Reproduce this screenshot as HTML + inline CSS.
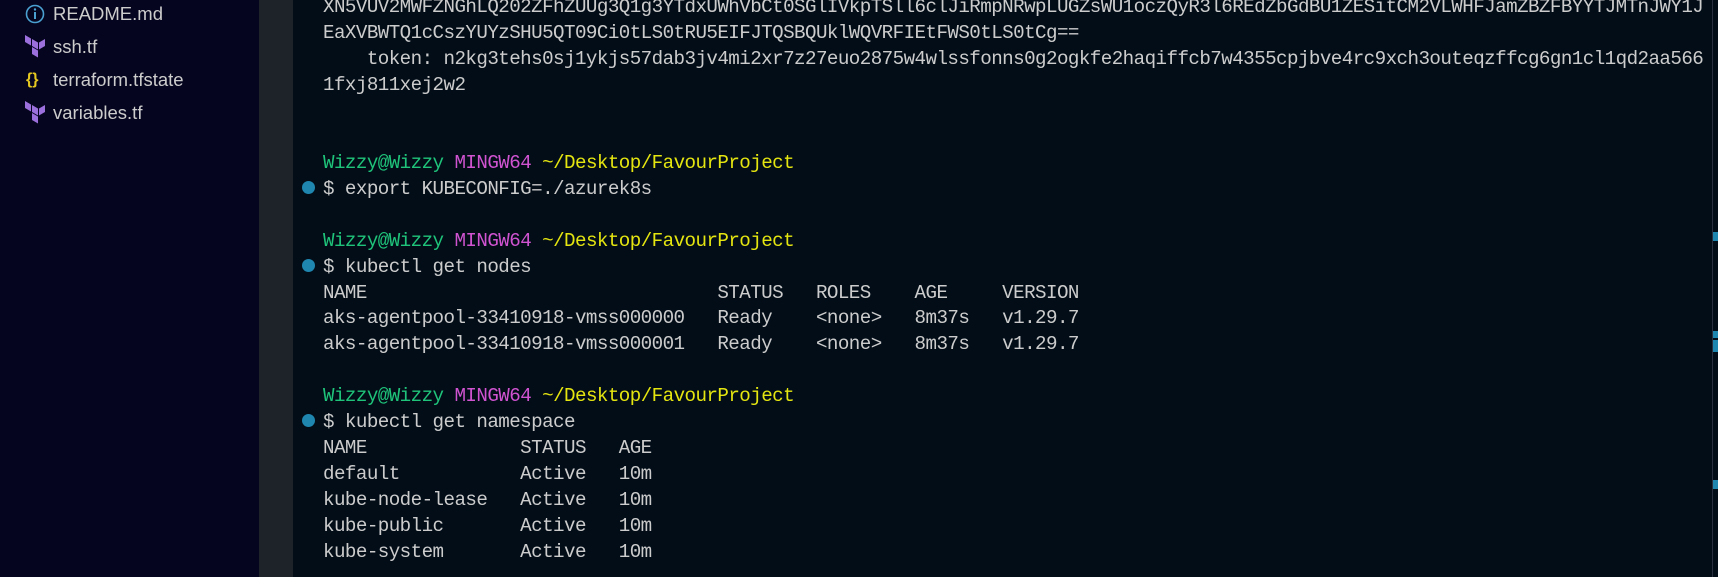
<!DOCTYPE html>
<html><head><meta charset="utf-8"><style>
html,body{margin:0;padding:0;width:1718px;height:577px;overflow:hidden;background:#020d18;}
#side{position:absolute;left:0;top:0;width:259px;height:577px;background:#05051f;}
#gap{position:absolute;left:259px;top:0;width:34px;height:577px;background:#1d2329;}
#term{position:absolute;left:293px;top:0;width:1425px;height:577px;background:#020d18;}
.f{position:absolute;left:53px;font:18.5px "Liberation Sans",sans-serif;color:#cccccc;line-height:24px;}
.ic{position:absolute;left:24px;}
.l{position:absolute;left:323px;font:19.2px "Liberation Mono",monospace;letter-spacing:-0.56px;color:#cccccc;line-height:26px;white-space:pre;}
.g{color:#1fc47a}.m{color:#d053d0}.y{color:#e5e510}
.dot{position:absolute;left:302px;width:13px;height:13px;border-radius:50%;background:#1f86b0;}
.sb{position:absolute;left:1713px;width:5px;background:#1f86b0;}
</style></head><body>
<div id="side">
 <svg class="ic" style="top:3px" width="22" height="22" viewBox="0 0 22 22"><circle cx="11" cy="11" r="8.5" fill="none" stroke="#4aa0d0" stroke-width="1.6"/><rect x="10" y="9" width="2" height="7" fill="#4aa0d0"/><circle cx="11" cy="6.5" r="1.2" fill="#4aa0d0"/></svg>
 <div class="f" style="top:2px">README.md</div>
 <svg class="ic" style="top:34px" width="22" height="24" viewBox="0 0 22 24"><path d="M1 1l6 3.5v7L1 8z M8 5l6 3.5v7L8 12z M15 8.5l6-3.5v7l-6 3.5z M8 13l6 3.5v7L8 20z" fill="#9b6fdc"/></svg>
 <div class="f" style="top:35px">ssh.tf</div>
 <div class="f" style="top:68px;left:26px;color:#e5c820;font-weight:bold;font-size:16px">{}</div>
 <div class="f" style="top:68px">terraform.tfstate</div>
 <svg class="ic" style="top:100px" width="22" height="24" viewBox="0 0 22 24"><path d="M1 1l6 3.5v7L1 8z M8 5l6 3.5v7L8 12z M15 8.5l6-3.5v7l-6 3.5z M8 13l6 3.5v7L8 20z" fill="#9b6fdc"/></svg>
 <div class="f" style="top:101px">variables.tf</div>
</div>
<div id="gap"></div>
<div id="term"></div>
<div style="position:absolute;left:1712px;top:0;width:1px;height:577px;background:#2a3040"></div>
<div class="sb" style="top:232px;height:9px"></div>
<div class="sb" style="top:331px;height:7px"></div>
<div class="sb" style="top:340px;height:12px"></div>
<div class="sb" style="top:480px;height:9px"></div>

<div class="l" style="top:-6px">XN5VUV2MWFZNGhLQ202ZFhZUUg3Q1g3YTdxUWhVbCt0SGlIVkpTSll6clJiRmpNRwpLUGZsWU1oczQyR3l6REdZbGdBU1ZESitCM2VLWHFJamZBZFBYYTJMTnJWY1J</div>
<div class="l" style="top:20px">EaXVBWTQ1cCszYUYzSHU5QT09Ci0tLS0tRU5EIFJTQSBQUklWQVRFIEtFWS0tLS0tCg==</div>
<div class="l" style="top:46px">    token: n2kg3tehs0sj1ykjs57dab3jv4mi2xr7z27euo2875w4wlssfonns0g2ogkfe2haqiffcb7w4355cpjbve4rc9xch3outeqzffcg6gn1cl1qd2aa566</div>
<div class="l" style="top:72px">1fxj811xej2w2</div>

<div class="l" style="top:150px"><span class="g">Wizzy@Wizzy</span> <span class="m">MINGW64</span> <span class="y">~/Desktop/FavourProject</span></div>
<div class="dot" style="top:181px"></div>
<div class="l" style="top:176px">$ export KUBECONFIG=./azurek8s</div>

<div class="l" style="top:228px"><span class="g">Wizzy@Wizzy</span> <span class="m">MINGW64</span> <span class="y">~/Desktop/FavourProject</span></div>
<div class="dot" style="top:259px"></div>
<div class="l" style="top:254px">$ kubectl get nodes</div>
<div class="l" style="top:280px">NAME                                STATUS   ROLES    AGE     VERSION</div>
<div class="l" style="top:305px">aks-agentpool-33410918-vmss000000   Ready    &lt;none&gt;   8m37s   v1.29.7</div>
<div class="l" style="top:331px">aks-agentpool-33410918-vmss000001   Ready    &lt;none&gt;   8m37s   v1.29.7</div>

<div class="l" style="top:383px"><span class="g">Wizzy@Wizzy</span> <span class="m">MINGW64</span> <span class="y">~/Desktop/FavourProject</span></div>
<div class="dot" style="top:414px"></div>
<div class="l" style="top:409px">$ kubectl get namespace</div>
<div class="l" style="top:435px">NAME              STATUS   AGE</div>
<div class="l" style="top:461px">default           Active   10m</div>
<div class="l" style="top:487px">kube-node-lease   Active   10m</div>
<div class="l" style="top:513px">kube-public       Active   10m</div>
<div class="l" style="top:539px">kube-system       Active   10m</div>
</body></html>
